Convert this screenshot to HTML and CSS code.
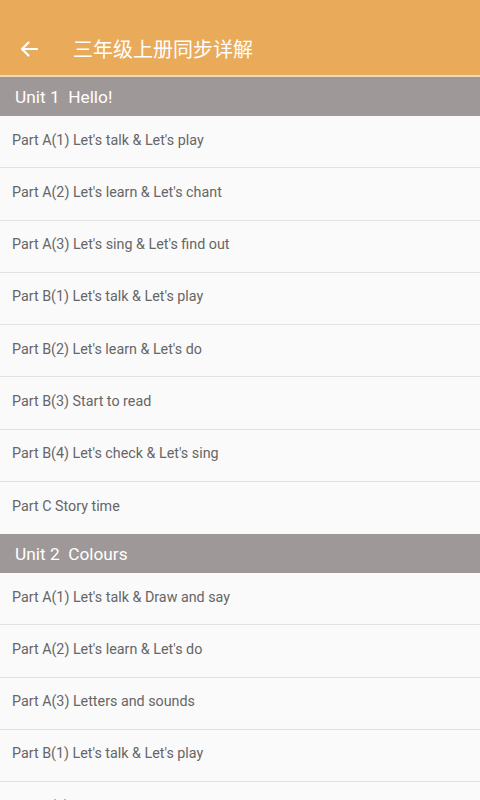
FILE: index.html
```html
<!DOCTYPE html>
<html lang="zh">
<head>
<meta charset="utf-8">
<link rel="stylesheet" href="styles.css">
</head>
<body>
<header class="bar">
  <svg class="back" width="18" height="16" viewBox="0 0 18 16"><path d="M17 8H2.5M8.5 1.5L2 8l6.5 6.5" fill="none" stroke="#fff" stroke-width="2.2" stroke-linecap="round" stroke-linejoin="round"/></svg>
  <h1 class="title">三年级上册同步详解</h1>
</header>
<main class="list">
  <div class="unit">Unit 1&nbsp; Hello!</div>
  <div class="row">Part A(1) Let's talk &amp; Let's play</div>
  <div class="row">Part A(2) Let's learn &amp; Let's chant</div>
  <div class="row">Part A(3) Let's sing &amp; Let's find out</div>
  <div class="row">Part B(1) Let's talk &amp; Let's play</div>
  <div class="row">Part B(2) Let's learn &amp; Let's do</div>
  <div class="row">Part B(3) Start to read</div>
  <div class="row">Part B(4) Let's check &amp; Let's sing</div>
  <div class="row">Part C Story time</div>
  <div class="unit">Unit 2&nbsp; Colours</div>
  <div class="row">Part A(1) Let's talk &amp; Draw and say</div>
  <div class="row">Part A(2) Let's learn &amp; Let's do</div>
  <div class="row">Part A(3) Letters and sounds</div>
  <div class="row">Part B(1) Let's talk &amp; Let's play</div>
  <div class="row">Part B(2) Let's learn &amp; Let's do</div>
</main>
</body>
</html>
```
FILE: styles.css
```css
html, body { margin: 0; padding: 0; }
body {
  width: 480px;
  height: 800px;
  overflow: hidden;
  background: #fafafa;
  font-family: Roboto, "Noto Sans", "Noto Sans CJK SC", sans-serif;
}
.bar {
  box-sizing: border-box;
  height: 77px;
  background: #e9aa5a;
  border-bottom: 2px solid #efd9bb;
  display: flex;
  align-items: center;
  padding-top: 22px;
}
.back { margin-left: 20px; flex: none; }
.title {
  margin: 0 0 0 35px;
  font-weight: 400;
  font-size: 20px;
  color: #fff;
  font-family: "Noto Sans CJK SC", sans-serif;
}
.list { display: flex; flex-direction: column; }
.unit {
  height: 38px;
  background: #9e9898;
  color: #fff;
  font-size: 17.3px;
  display: flex;
  align-items: center;
  padding-left: 15px;
  padding-top: 1px;
  flex: none;
}
.row {
  box-sizing: content-box;
  height: 47.25px;
  padding-bottom: 4px;
  border-bottom: 1px solid #e2e2e2;
  display: flex;
  align-items: center;
  padding-left: 12px;
  color: #666;
  font-size: 14.3px;
  flex: none;
}
.row:nth-child(9) { border-bottom: none; height: 48.25px; }
```
